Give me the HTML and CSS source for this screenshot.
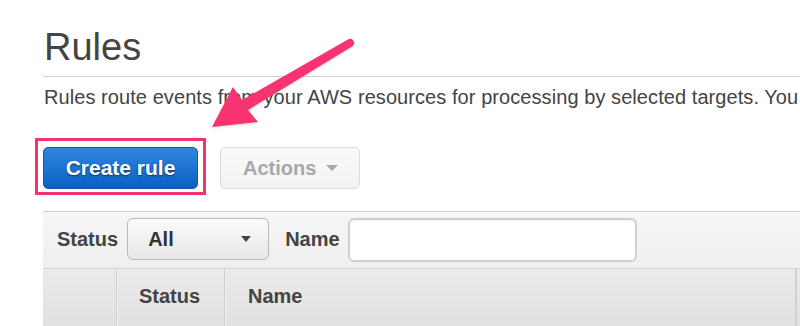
FILE: index.html
```html
<!DOCTYPE html>
<html lang="en">
<head>
<meta charset="utf-8">
<title>Rules</title>
<link rel="stylesheet" href="styles.css">
</head>
<body>
<main class="page">
  <h1 class="title">Rules</h1>
  <p class="desc">Rules route events from your AWS resources for processing by selected targets. You</p>
  <div class="toolbar">
    <button class="btn btn-primary highlight" type="button">Create rule</button>
    <button class="btn btn-disabled" type="button">Actions <span class="caret caret-light"></span></button>
  </div>
  <section class="table">
    <div class="filter">
      <label class="filter-label label-status">Status</label>
      <div class="select"><span>All</span><span class="caret caret-dark"></span></div>
      <label class="filter-label label-name">Name</label>
      <div class="input"></div>
    </div>
    <div class="thead">
      <div class="th th-check"></div>
      <div class="th th-status">Status</div>
      <div class="th th-name">Name</div>
      <div class="th th-rest"></div>
    </div>
  </section>
</main>
<svg class="arrow" width="800" height="326" viewBox="0 0 800 326" aria-hidden="true">
  <path d="M212,127 L233,87 L242,100 L348,39.5 A4,4 0 0 1 352,46.5 L248,110 L258,122 Z" fill="#f73471"/>
</svg>
</body>
</html>
```
FILE: styles.css
```css
html, body {
  margin: 0;
  padding: 0;
  background: #fff;
}
body {
  width: 800px;
  height: 326px;
  overflow: hidden;
  position: relative;
  font-family: "Liberation Sans", Arial, Helvetica, sans-serif;
  color: #444;
}
.page {
  padding-left: 43px;
}
.title {
  margin: 0;
  padding: 25px 0 7px 1px;
  font-size: 38px;
  line-height: 44px;
  font-weight: normal;
  color: #444;
  border-bottom: 1px solid #cfcfcf;
}
.desc {
  margin: 8px 0 0 1px;
  font-size: 20px;
  line-height: 24px;
  letter-spacing: 0.07px;
  white-space: nowrap;
  color: #444;
}
.toolbar {
  display: flex;
  gap: 22px;
  margin-top: 38px;
}
.btn {
  height: 42px;
  border-radius: 5px;
  font-family: inherit;
  font-size: 20px;
  font-weight: bold;
  padding: 0 22px;
  display: flex;
  align-items: center;
  gap: 10px;
}
.btn-primary {
  width: 155px;
  justify-content: center;
  padding: 0;
  font-size: 21px;
  color: #fff;
  background: linear-gradient(#2f87df, #0b60c4);
  border: 1px solid #1657b0;
  text-shadow: 0 1px 2px rgba(0, 0, 0, 0.55);
}
.highlight {
  position: relative;
}
.highlight::after {
  content: "";
  position: absolute;
  top: -10px;
  bottom: -7px;
  left: -9px;
  right: -9px;
  border: 3px solid #f7306f;
  pointer-events: none;
}
.btn-disabled {
  width: 140px;
  color: #a8a8a8;
  background: linear-gradient(#fafafa, #f2f2f2);
  border: 1px solid #dcdcdc;
}
.caret {
  display: inline-block;
  width: 0;
  height: 0;
  border-left: 6px solid transparent;
  border-right: 6px solid transparent;
}
.caret-light {
  border-top: 6px solid #a8a8a8;
}
.caret-dark {
  border-left-width: 5px;
  border-right-width: 5px;
  border-top: 6px solid #444;
}
.table {
  margin-top: 22px;
  border-top: 1px solid #cecece;
}
.filter {
  height: 50px;
  padding-top: 6px;
  display: flex;
  align-items: flex-start;
  background: linear-gradient(#f6f6f6, #efefef);
  border-bottom: 1px solid #d4d4d4;
}
.filter-label {
  font-size: 20px;
  font-weight: bold;
  line-height: 42px;
  color: #444;
}
.label-status {
  margin-left: 14px;
  margin-right: 9px;
}
.label-name {
  margin-left: 16px;
  margin-right: 8px;
}
.select {
  box-sizing: border-box;
  width: 142px;
  height: 42px;
  border: 1px solid #b8b8b8;
  border-radius: 6px;
  background: linear-gradient(#fbfbfb, #e8e8e8);
  display: flex;
  align-items: center;
  justify-content: space-between;
  padding: 0 17px 0 20px;
  font-size: 20px;
  font-weight: bold;
  color: #333;
}
.input {
  box-sizing: border-box;
  width: 289px;
  height: 44px;
  border: 2px solid #d0d0d0;
  border-radius: 6px;
  background: #fff;
  box-shadow: inset 0 1px 2px rgba(0, 0, 0, 0.06);
}
.thead {
  display: flex;
  height: 60px;
  background: linear-gradient(#ebebeb, #e0e0e0);
}
.th {
  box-sizing: border-box;
  padding-top: 15px;
  font-size: 20px;
  line-height: 24px;
  font-weight: bold;
  color: #444;
}
.th-check {
  width: 73px;
}
.th-status {
  width: 108px;
  padding-left: 22px;
  border-left: 1px solid #cdcdcd;
  box-shadow: inset 1px 0 #f4f4f4;
}
.th-name {
  width: 571px;
  padding-left: 23px;
  border-left: 1px solid #cdcdcd;
  box-shadow: inset 1px 0 #f4f4f4;
}
.th-rest {
  flex: 1;
  border-left: 2px solid #d0d0d0;
}
.arrow {
  position: absolute;
  left: 0;
  top: 0;
  pointer-events: none;
  filter: drop-shadow(0 1px 1px rgba(0, 0, 0, 0.15));
}
```
